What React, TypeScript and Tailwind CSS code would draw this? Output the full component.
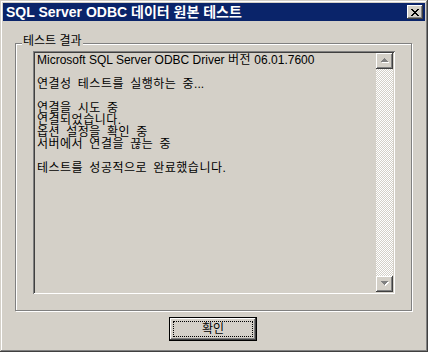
const raised =
  "shadow-[inset_-1px_-1px_#404040,inset_1px_1px_#ffffff,inset_-2px_-2px_#808080,inset_2px_2px_#d4d0c8]";

function Arrow({ up }: { up: boolean }) {
  const rows = up ? [0, 1, 2, 3] : [3, 2, 1, 0];
  return (
    <svg width="9" height="6" viewBox="0 0 9 6" shapeRendering="crispEdges">
      {rows.map((w, i) => (
        <rect key={"w" + i} x={4 - w + 1} y={i + 1} width={w * 2 + 1} height={1} fill="#ffffff" />
      ))}
      {rows.map((w, i) => (
        <rect key={"g" + i} x={4 - w} y={i} width={w * 2 + 1} height={1} fill="#808080" />
      ))}
    </svg>
  );
}

function Line({ text }: { text: string }) {
  const parts = text.split(/([\uAC00-\uD7A3]+(?:\s+[\uAC00-\uD7A3]+)*)/);
  return (
    <div className="h-[12px] whitespace-pre">
      {parts.map((p, i) =>
        /[\uAC00-\uD7A3]/.test(p) ? (
          <span key={i} className="text-[12px] font-['Noto_Sans_CJK_KR',sans-serif] tracking-[0.5px] [word-spacing:3px]">
            {p}
          </span>
        ) : (
          <span key={i}>{p}</span>
        )
      )}
    </div>
  );
}

export default function App() {
  const lines = [
    "Microsoft SQL Server ODBC Driver 버전 06.01.7600",
    "",
    "연결성 테스트를 실행하는 중...",
    "",
    "연결을 시도 중",
    "연결되었습니다.",
    "옵션 설정을 확인 중",
    "서버에서 연결을 끊는 중",
    "",
    "테스트를 성공적으로 완료했습니다.",
  ];
  return (
    <div className="w-[428px] h-[352px] bg-[#d4d0c8] p-[3px] flex flex-col font-['Liberation_Sans','Noto_Sans_CJK_KR',sans-serif] text-black shadow-[inset_-1px_-1px_#404040,inset_1px_1px_#d4d0c8,inset_-2px_-2px_#808080,inset_2px_2px_#ffffff]">
      <div className="h-[18px] bg-[#0a246a] flex items-center justify-between pl-[3px] pr-[2px]">
        <span className="text-white font-bold text-[14px] leading-[18px] whitespace-nowrap">
          SQL Server ODBC 데이터 원본 테스트
        </span>
        <div className={"w-[16px] h-[14px] bg-[#d4d0c8] flex items-center justify-center " + raised}>
          <svg width="8" height="7" viewBox="0 0 8 7" shapeRendering="crispEdges">
            <path d="M0 0h2v1h-2zM6 0h2v1h-2zM1 1h2v1h-2zM5 1h2v1h-2zM2 2h4v1h-4zM3 3h2v1h-2zM2 4h4v1h-4zM1 5h2v1h-2zM5 5h2v1h-2zM0 6h2v1h-2zM6 6h2v1h-2z" fill="#000" />
          </svg>
        </div>
      </div>

      <div className="relative ml-[12px] mt-[22px] w-[397px] h-[268px] border border-[#808080] shadow-[inset_1px_1px_#ffffff,1px_1px_#ffffff] pt-[7px] pl-[17px]">
        <span className="absolute left-[6px] top-[-9px] px-[1px] bg-[#d4d0c8] text-[12px] leading-[12px] whitespace-nowrap">
          테스트 결과
        </span>
        <div className="w-[362px] h-[243px] p-[2px] flex bg-[#d4d0c8] shadow-[inset_1px_1px_#808080,inset_-1px_-1px_#ffffff,inset_2px_2px_#404040,inset_-2px_-2px_#d4d0c8]">
          <div className="flex-1 pl-[2px] text-[12px] leading-[12px]">
            {lines.map((l, i) => (
              <Line key={i} text={l} />
            ))}
          </div>
          <div className="w-[17px] flex flex-col">
            <div className={"h-[16px] flex items-center justify-center bg-[#d4d0c8] " + raised}>
              <Arrow up={true} />
            </div>
            <div className="flex-1 bg-[conic-gradient(#ffffff_25%,#d4d0c8_0_50%,#ffffff_0_75%,#d4d0c8_0)] bg-[length:2px_2px]" />
            <div className={"h-[16px] flex items-center justify-center bg-[#d4d0c8] " + raised}>
              <Arrow up={false} />
            </div>
          </div>
        </div>
      </div>

      <div className="mt-[6px] ml-[166px] w-[88px] h-[24px] border border-black">
        <div className={"w-full h-full p-[3px] " + raised}>
          <div className="w-full h-full border border-dotted border-black flex items-center justify-center text-[12px] leading-[12px]">
            확인
          </div>
        </div>
      </div>
    </div>
  );
}
